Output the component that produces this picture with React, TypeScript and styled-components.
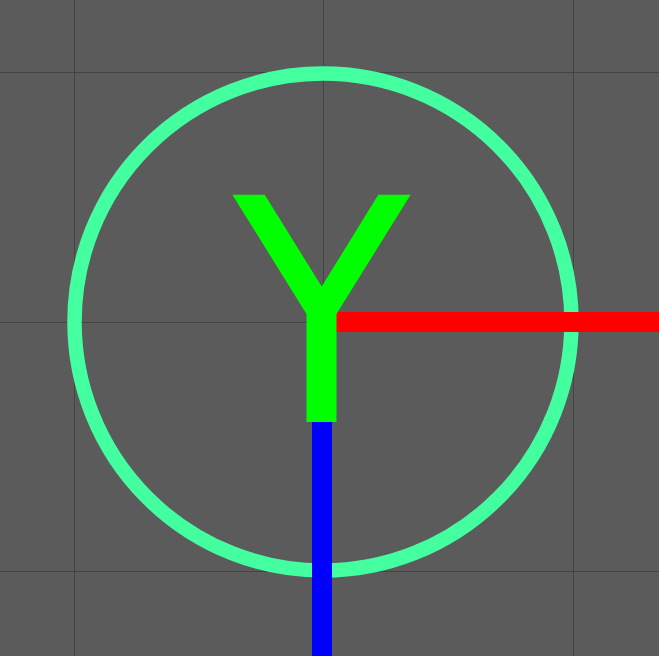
import styled, { createGlobalStyle } from "styled-components";

const GlobalStyle = createGlobalStyle`
  html, body {
    margin: 0;
    padding: 0;
    background: #5b5b5b;
    overflow: hidden;
  }
`;

const Viewport = styled.div`
  width: 659px;
  height: 656px;
  background: #5b5b5b;
  overflow: hidden;
`;

const Canvas = styled.svg`
  display: block;
  width: 100%;
  height: 100%;
`;

const AxisLabel = styled.text`
  font-family: "DejaVu Sans", "Liberation Sans", sans-serif;
  font-size: 309px;
  fill: #00ff00;
  stroke: #00ff00;
  stroke-width: 2px;
`;

const gridX = [74.5, 323.5, 573.5];
const gridY = [72.5, 322.5, 571.5];

export default function App() {
  return (
    <>
      <GlobalStyle />
      <Viewport>
        <Canvas viewBox="0 0 659 656">
          {/* grid */}
          {gridX.map((x) => (
            <line key={"v" + x} x1={x} y1={0} x2={x} y2={656} stroke="#444444" strokeWidth={1} />
          ))}
          {gridY.map((y) => (
            <line key={"h" + y} x1={0} y1={y} x2={659} y2={y} stroke="#444444" strokeWidth={1} />
          ))}

          {/* rotation ring */}
          <circle cx={323} cy={322} r={248.5} fill="none" stroke="#44ffa0" strokeWidth={14.5} />

          {/* X axis */}
          <rect x={336} y={312} width={323} height={20} fill="#ff0000" />
          {/* Z axis */}
          <rect x={312} y={422} width={20} height={234} fill="#0000ff" />

          {/* Y axis label */}
          <g transform="translate(321.5 0) scale(0.92 1) translate(-321.5 0)">
            <AxisLabel x={321.5} y={421} textAnchor="middle">
              Y
            </AxisLabel>
          </g>
        </Canvas>
      </Viewport>
    </>
  );
}
